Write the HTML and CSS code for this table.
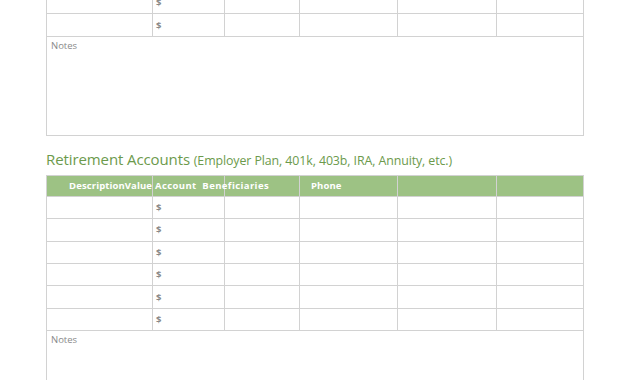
FILE: index.html
```html
<!DOCTYPE html>
<html>
<head>
<meta charset="utf-8">
<link rel="stylesheet" href="styles.css">
</head>
<body>
<div class="page">
  <table class="sheet sheet-top">
    <colgroup><col class="c1"><col class="c2"><col class="c3"><col class="c4"><col class="c5"><col class="c6"></colgroup>
    <tr class="row"><td></td><td class="dollar">$</td><td></td><td></td><td></td><td></td></tr>
    <tr class="row"><td></td><td class="dollar">$</td><td></td><td></td><td></td><td></td></tr>
    <tr><td colspan="6" class="notes">Notes</td></tr>
  </table>

  <h2 class="section-title">Retirement Accounts <span class="sub">(Employer Plan, 401k, 403b, IRA, Annuity, etc.)</span></h2>

  <table class="sheet">
    <colgroup><col class="c1"><col class="c2"><col class="c3"><col class="c4"><col class="c5"><col class="c6"></colgroup>
    <tr class="head">
      <th class="h-desc">DescriptionValue</th>
      <th class="h-acct">Account&nbsp; Beneficiaries</th>
      <th></th>
      <th class="h-phone">Phone</th>
      <th></th>
      <th></th>
    </tr>
    <tr class="row"><td></td><td class="dollar">$</td><td></td><td></td><td></td><td></td></tr>
    <tr class="row"><td></td><td class="dollar">$</td><td></td><td></td><td></td><td></td></tr>
    <tr class="row"><td></td><td class="dollar">$</td><td></td><td></td><td></td><td></td></tr>
    <tr class="row"><td></td><td class="dollar">$</td><td></td><td></td><td></td><td></td></tr>
    <tr class="row"><td></td><td class="dollar">$</td><td></td><td></td><td></td><td></td></tr>
    <tr class="row"><td></td><td class="dollar">$</td><td></td><td></td><td></td><td></td></tr>
    <tr><td colspan="6" class="notes">Notes</td></tr>
  </table>
</div>
</body>
</html>
```

FILE: styles.css
```css
html, body {
  margin: 0;
  padding: 0;
  background: #ffffff;
  overflow: hidden;
}
body {
  font-family: "Liberation Sans", Arial, sans-serif;
}
.page {
  width: 630px;
  height: 380px;
  overflow: hidden;
  padding-left: 46px;
  box-sizing: border-box;
}
.sheet {
  width: 537px;
  border-collapse: collapse;
  table-layout: fixed;
}
.sheet-top {
  margin-top: -9px;
}
.c1 { width: 106px; }
.c2 { width: 72px; }
.c3 { width: 75px; }
.c4 { width: 98px; }
.c5 { width: 99px; }
.c6 { width: 87px; }

.sheet td, .sheet th {
  border: 1.5px solid #d2d2d2;
  padding: 0;
}
.row td {
  height: 21.4px;
}
.dollar {
  font-family: "Open Sans", sans-serif;
  font-size: 9.5px;
  font-weight: bold;
  color: #888888;
  padding-left: 3px !important;
  vertical-align: middle;
}
.notes {
  height: 96px;
  vertical-align: top;
  font-family: "Open Sans", sans-serif;
  font-size: 9.5px;
  color: #8a8a8a;
  padding: 2px 4px 0 4px !important;
}
.section-title {
  margin: 14px 0 5px 0;
  font-family: "Open Sans", sans-serif;
  font-weight: 400;
  font-size: 15px;
  line-height: 18px;
  color: #6c9a4c;
  letter-spacing: -0.1px;
}
.section-title .sub {
  font-size: 12.4px;
  letter-spacing: -0.1px;
}
.head th {
  background: #9dc284;
  height: 20px;
  color: #ffffff;
  font-family: "Open Sans", sans-serif;
  font-weight: bold;
  font-size: 9.5px;
  letter-spacing: 0.1px;
  white-space: nowrap;
  overflow: visible;
  text-align: left;
  vertical-align: middle;
}
.h-desc {
  text-align: right !important;
  padding-right: 0 !important;
}
.h-acct { padding-left: 2px !important; letter-spacing: 0.4px !important; }
.h-phone { padding-left: 11px !important; }
```
